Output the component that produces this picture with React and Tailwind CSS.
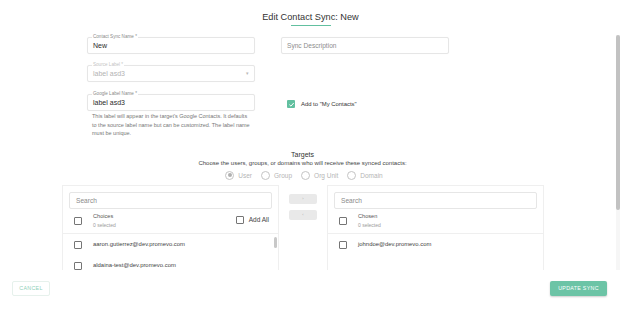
import React from "react";

const font = { fontFamily: '"Liberation Sans", Arial, sans-serif' };

function Box({ checked }) {
  if (checked) {
    return (
      <span className="w-[8px] h-[8px] rounded-[1px] bg-[#62c0a0] flex items-center justify-center shrink-0">
        <svg viewBox="0 0 10 10" className="w-[7px] h-[7px]">
          <path d="M2 5.2 L4.2 7.3 L8.2 2.8" fill="none" stroke="#fff" strokeWidth="1.4" />
        </svg>
      </span>
    );
  }
  return <span className="w-[8px] h-[8px] rounded-[1px] border border-[#757575] shrink-0 block"></span>;
}

function Radio({ on, label }) {
  return (
    <div className="flex items-center gap-[4px]">
      <span className="w-[9px] h-[9px] rounded-full border border-[#c4c4c4] flex items-center justify-center">
        {on && <span className="w-[4px] h-[4px] rounded-full bg-[#b0b0b0]"></span>}
      </span>
      <span className="text-[6.5px] text-[#b5b5b5]">{label}</span>
    </div>
  );
}

function Field({ label, value, width, muted, placeholder, select }) {
  return (
    <div className={`relative h-[17px] ${width} border border-[#e6e6e6] rounded-[2px] shadow-[0_0_1px_rgba(0,0,0,0.06)] flex items-center px-[5px]`}>
      {label && (
        <span className={`absolute left-[4px] top-[-3px] bg-white px-[1px] text-[4.6px] leading-none ${muted ? "text-[#c4c4c4]" : "text-[#8a8a8a]"}`}>
          {label}
        </span>
      )}
      {placeholder ? (
        <span className="text-[6.6px] text-[#8d8d8d]">{placeholder}</span>
      ) : (
        <span className={`text-[7px] mt-[2px] ${muted ? "text-[#b3b3b3]" : "text-[#2b2b2b]"}`}>{value}</span>
      )}
      {select && <span className="ml-auto text-[5px] text-[#b8b8b8] mt-[1px]">▾</span>}
    </div>
  );
}

function ListPanel({ title, items, addAll, scroll }) {
  return (
    <div className="w-[217px] h-[90px] border border-[#efefef] border-b-0 flex flex-col pt-[6px] relative">
      <div className="mx-[6px] h-[17px] border border-[#e6e6e6] rounded-[2px] flex items-center px-[6px] shrink-0">
        <span className="text-[6.6px] text-[#8a8a8a]">Search</span>
      </div>
      <div className="h-[25px] border-b border-[#efefef] flex items-center pl-[11px] pr-[9px] shrink-0">
        <Box />
        <div className="ml-[11px] flex flex-col leading-none">
          <span className="text-[5.6px] text-[#555]">{title}</span>
          <span className="text-[5px] text-[#9a9a9a] mt-[3px]">0 selected</span>
        </div>
        {addAll && (
          <div className="ml-auto flex items-center gap-[5px] mt-[-3px]">
            <Box />
            <span className="text-[6.5px] text-[#444]">Add All</span>
          </div>
        )}
      </div>
      {items.map((it) => (
        <div key={it} className="h-[21px] flex items-center pl-[11px] shrink-0">
          <Box />
          <span className="ml-[11px] text-[5.9px] text-[#444]">{it}</span>
        </div>
      ))}
      {scroll && <span className="absolute left-[211px] top-[51px] w-[3px] h-[11px] rounded-full bg-[#c8c8c8]"></span>}
    </div>
  );
}

export default function App() {
  return (
    <div style={font} className="w-[621px] h-[309px] bg-white flex flex-col overflow-hidden">
      <div className="h-[33px] flex flex-col items-center pt-[13px]">
        <span className="text-[9.2px] text-[#333] leading-none">Edit Contact Sync: New</span>
        <span className="w-[40px] h-[1px] bg-[#62c0a0] mt-[3px]"></span>
      </div>
      <div className="h-[237px] relative overflow-hidden flex">
        <div className="w-[605px] flex flex-col">
          <div className="flex pl-[87px] pt-[4px] gap-[26px]">
            <div className="flex flex-col">
              <Field label="Contact Sync Name *" value="New" width="w-[168px]" />
              <div className="mt-[11px]">
                <Field label="Source Label *" value="label asd3" width="w-[168px]" muted select />
              </div>
              <div className="mt-[12px]">
                <Field label="Google Label Name *" value="label asd3" width="w-[168px]" />
              </div>
              <p className="text-[5.5px] leading-[8.5px] text-[#777] pl-[5px] pt-[1px] w-[165px]">
                This label will appear in the target's Google Contacts. It defaults to the source label name but can be customized. The label name must be unique.
              </p>
            </div>
            <div className="flex flex-col">
              <Field placeholder="Sync Description" width="w-[168px]" />
              <div className="mt-[46px] flex items-center gap-[6px] pl-[6px]">
                <Box checked />
                <span className="text-[5.9px] text-[#333]">Add to "My Contacts"</span>
              </div>
            </div>
          </div>
          <div className="flex flex-col items-center mt-[13px]">
            <span className="text-[7px] text-[#333] leading-none">Targets</span>
            <span className="text-[6px] text-[#444] leading-none mt-[2px]">
              Choose the users, groups, or domains who will receive these synced contacts:
            </span>
            <div className="flex items-center gap-[9px] mt-[5px] ml-[3px]">
              <Radio on label="User" />
              <Radio label="Group" />
              <Radio label="Org Unit" />
              <Radio label="Domain" />
            </div>
          </div>
          <div className="flex pl-[62px] mt-[5px]">
            <ListPanel
              title="Choices"
              addAll
              scroll
              items={["aaron.gutierrez@dev.promevo.com", "aldaina-test@dev.promevo.com"]}
            />
            <div className="w-[48px] flex flex-col items-center pt-[9px] gap-[6px]">
              <span className="w-[28px] h-[10px] rounded-[2px] bg-[#e9e9e9] flex items-center justify-center text-[4px] text-[#aaa]">›</span>
              <span className="w-[28px] h-[10px] rounded-[2px] bg-[#e9e9e9] flex items-center justify-center text-[4px] text-[#aaa]">‹</span>
            </div>
            <ListPanel title="Chosen" items={["johndoe@dev.promevo.com"]} />
          </div>
        </div>
        <div className="absolute right-[1px] top-[2px] w-[4px] h-[237px] bg-[#f6f6f6]">
          <div className="w-[4px] h-[175px] rounded-full bg-[#c2c2c2]"></div>
        </div>
      </div>
      <div className="flex-1 flex items-center justify-between px-[12px] pb-[2px]">
        <button className="w-[38px] h-[15px] border border-[#e6f1ec] rounded-[2px] text-[5.3px] tracking-[0.3px] text-[#8fd1b9]">
          CANCEL
        </button>
        <button className="w-[57px] h-[15px] rounded-[2px] bg-[#6cc4a6] shadow-[0_1px_2px_rgba(0,0,0,0.2)] text-[5.3px] tracking-[0.3px] text-white mr-[2px]">
          UPDATE SYNC
        </button>
      </div>
    </div>
  );
}
